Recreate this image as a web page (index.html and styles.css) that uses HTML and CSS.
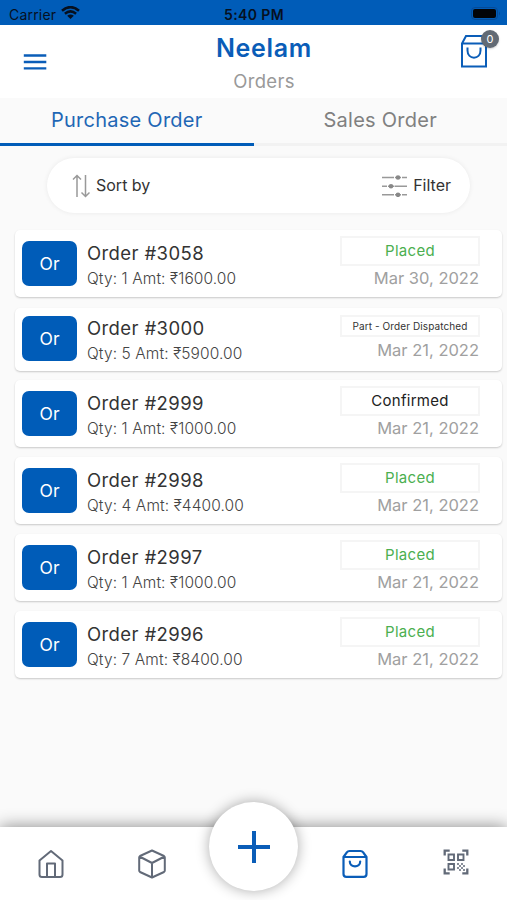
FILE: index.html
```html
<!DOCTYPE html>
<html lang="en">
<head>
<meta charset="utf-8">
<title>Orders</title>
<link rel="stylesheet" href="styles.css">
</head>
<body>
<div class="app">
  <div class="status">
    <div class="carrier"><span>Carrier</span>
      <svg width="19" height="14" viewBox="0 0 19 14"><path d="M1 4.8Q9.5-2.6 18 4.8M3.9 7.8Q9.500 3 15.100 7.800" fill="none" stroke="#06101f" stroke-width="2.500"/><path d="M6.200 9.700Q9.500 7.200 12.800 9.700L9.500 13Z" fill="#06101f"/></svg>
    </div>
    <div class="clock">5:40 PM</div>
    <svg class="battery" width="30" height="13" viewBox="0 0 30 13"><rect x=".5" y=".5" width="26" height="12" rx="3.500" fill="none" stroke="#064a96"/><rect x="2" y="2" width="23" height="9" rx="2" fill="#020408"/><path d="M28 4.500q2 2 0 4z" fill="#064a96"/></svg>
  </div>
  <header class="header">
    <svg class="menu" width="24" height="16" viewBox="0 0 24 16"><path d="M.8 1.500h22.500M.8 8h22.500M.8 14.400h22.500" stroke="#0a5db8" stroke-width="2.300"/></svg>
    <div class="titles"><h1>Neelam</h1><p>Orders</p></div>
    <div class="cart">
      <svg width="28" height="34" viewBox="0 0 28 34" fill="none" stroke="#0a5db8" stroke-width="2"><path d="M2 9.500 6 2h16l4 7.500V32.500H2ZM2 9.500h24"/><path d="M7.500 13.500v3c0 9.500 13 9.500 13 0v-3"/></svg>
      <span class="count">0</span>
    </div>
  </header>
  <nav class="tabs"><div class="tab active"><span>Purchase Order</span></div><div class="tab"><span class="sales">Sales Order</span></div></nav>
  <div class="tools">
    <div class="tool">
      <svg width="18" height="24" viewBox="0 0 18 24" fill="none" stroke="#999" stroke-width="1.500"><path d="M5 23V1.500M1 5.500l4-4 4 4M13.500 1v21.500M9.500 18.500l4 4 4-4"/></svg>
      <span class="sort">Sort by</span>
    </div>
    <div class="tool">
      <svg width="25" height="22" viewBox="0 0 25 22" stroke="#999" stroke-width="1.400"><path d="M0 2.500h12M20 2.500h5M0 11.200h5M12.500 11.200H25M0 19.800h12M20 19.800h5M13 2.500h6M6 11.200h6M13 19.800h6"/><g fill="#888" stroke="none"><circle cx="16" cy="2.500" r="2.300"/><circle cx="9" cy="11.200" r="2.300"/><circle cx="16" cy="19.800" r="2.300"/></g></svg>
      <span class="filter">Filter</span>
    </div>
  </div>
  <main class="orders">
    <article class="card first"><div class="avatar">Or</div><div class="info"><h2>Order #3058</h2><p>Qty: 1 Amt: ₹1600.00</p></div><div class="meta"><div class="badge placed">Placed</div><time>Mar 30, 2022</time></div></article>
    <article class="card short"><div class="avatar">Or</div><div class="info"><h2>Order #3000</h2><p>Qty: 5 Amt: ₹5900.00</p></div><div class="meta"><div class="badge part">Part - Order Dispatched</div><time>Mar 21, 2022</time></div></article>
    <article class="card"><div class="avatar">Or</div><div class="info"><h2>Order #2999</h2><p>Qty: 1 Amt: ₹1000.00</p></div><div class="meta"><div class="badge confirmed">Confirmed</div><time>Mar 21, 2022</time></div></article>
    <article class="card"><div class="avatar">Or</div><div class="info"><h2>Order #2998</h2><p>Qty: 4 Amt: ₹4400.00</p></div><div class="meta"><div class="badge placed">Placed</div><time>Mar 21, 2022</time></div></article>
    <article class="card"><div class="avatar">Or</div><div class="info"><h2>Order #2997</h2><p>Qty: 1 Amt: ₹1000.00</p></div><div class="meta"><div class="badge placed">Placed</div><time>Mar 21, 2022</time></div></article>
    <article class="card"><div class="avatar">Or</div><div class="info"><h2>Order #2996</h2><p>Qty: 7 Amt: ₹8400.00</p></div><div class="meta"><div class="badge placed">Placed</div><time>Mar 21, 2022</time></div></article>
  </main>
  <footer class="bottom">
    <div class="item"><svg width="26" height="30" viewBox="0 0 26 30" fill="none" stroke="#626a78" stroke-width="2" stroke-linejoin="round"><path d="M1.500 11.500 13 2l11.500 9.500v14q0 2.500-2.500 2.500H4q-2.500 0-2.500-2.500Z"/><path d="M9 28V14.500h8V28"/></svg></div>
    <div class="item"><svg width="28" height="30" viewBox="0 0 28 30" fill="none" stroke="#626a78" stroke-width="2" stroke-linejoin="round"><path d="M14 1.500 26 7q.8.500.8 1.500v13q0 1-.8 1.500L14 28.500 2 23q-.8-.5-.8-1.500v-13Q1.200 7.500 2 7ZM1.500 7.500 14 14l12.500-6.500M14 14v14.500"/></svg></div>
    <div class="item"></div>
    <div class="item"><svg width="26" height="30" viewBox="0 0 26 30" fill="none" stroke="#0a5db8" stroke-width="2.200" stroke-linejoin="round" stroke-linecap="round"><path d="M1.500 8 5 3.200Q5.800 2 7.500 2h11q1.700 0 2.500 1.200L24.500 8v17q0 2.800-2.800 2.800H4.300q-2.800 0-2.800-2.800ZM2 8h22"/><path d="M7.800 12.500c0 6.500 10.400 6.500 10.400 0"/></svg></div>
    <div class="item"><svg class="qr" width="26" height="26" viewBox="0 0 26 26" fill="none" stroke="#626a78" stroke-width="1.900"><path d="M1.700 6.500v-4.800h5M19.300 1.700h5v4.800M1.700 19.500v4.800h5M19.300 24.300h5v-4.800" stroke-width="2.300"/><path d="M5.500 5.500h5.500v5.500H5.500ZM15 5.500h5.500v5.500H15ZM5.500 15h5.500v5.500H5.500Z"/><path d="M14 15h2m2 0h2M16 17h2m2 0h2M14 19h2m2 0h2M16 21h2m2 0h2" stroke-width="1.700"/></svg></div>
    <div class="fab"><svg width="34" height="34" viewBox="0 0 34 34"><path d="M17 1v32M1 17h32" stroke="#0a5db8" stroke-width="4"/></svg></div>
  </footer>
</div>
</body>
</html>
```
FILE: styles.css
```css
* { box-sizing: border-box; }
body, h1, h2, p { margin: 0; font-weight: 400; }
body { font-family: Inter, "Noto Sans", sans-serif; color: #333; }
svg { display: block; flex: none; }
span, time, h1, h2, p, .badge { white-space: nowrap; }
.app { width: 507px; height: 900px; background: #fafafa; display: flex; flex-direction: column; overflow: hidden; }

.status { height: 25px; background: #005cb8; color: #06101f; display: grid; grid-template-columns: 1fr auto 1fr; align-items: center; padding: 3px 6px 0 9px; font-size: 14px; flex: none; }
.carrier { display: flex; align-items: center; gap: 5px; letter-spacing: .2px; }
.carrier svg { margin-top: -2px; }
.clock { font-weight: 600; letter-spacing: .4px; margin-right: 2px; }
.battery { justify-self: end; margin-top: -2px; }

.header { height: 73px; background: #fff; display: flex; align-items: flex-start; flex: none; padding-left: 23px; }
.menu { margin-top: 29px; }
.titles { width: 200px; margin-left: 117px; text-align: center; }
h1 { color: #0a5db8; font-size: 25px; font-weight: 600; line-height: 30px; margin-top: 8px; letter-spacing: .7px; }
.titles p { color: #999; font-size: 18.5px; line-height: 24px; margin-top: 6px; letter-spacing: .3px; }
.cart { position: relative; margin: 9px 0 0 96px; }
.count { position: absolute; left: 21px; top: -4px; width: 18px; height: 18px; border-radius: 50%; background: #626a74; color: #fff; font-size: 11px; line-height: 18px; text-align: center; box-shadow: 0 1px 2px #0003; }

.tabs { display: flex; height: 48px; flex: none; }
.tab { flex: 1; display: flex; align-items: flex-start; justify-content: center; padding-top: 9px; border-bottom: 3px solid #f2f2f2; color: #808080; font-size: 20px; line-height: 26px; letter-spacing: .25px; }
.tab.active { color: #1f67b5; border-color: #005cb8; }

.tools { width: 423px; height: 55px; margin: 12px 0 0 47px; padding: 0 19px 0 25px; border-radius: 28px; background: #fff; box-shadow: 0 0 5px #00000012; display: flex; align-items: center; justify-content: space-between; flex: none; }
.tool { display: flex; align-items: center; gap: 6px; font-size: 16px; }
.tool span { margin-top: -2px; }

.orders { display: flex; flex-direction: column; gap: 10px; padding: 17px 5px 0 15px; flex: 1; }
.card { height: 67px; background: #fff; border-radius: 5px; box-shadow: 0 1px 2px #0003; display: flex; padding: 0 22px 0 7px; flex: none; }
.card.first { margin-bottom: 1px; }
.card.short { height: 63px; margin-bottom: -1px; }
.avatar { width: 55px; height: 45px; margin-top: 11px; background: #005cb8; border-radius: 7px; color: #fff; font-size: 17.5px; line-height: 45px; text-align: center; }
.info { margin: 11px 0 0 10px; flex: 1; }
h2 { font-size: 18.5px; line-height: 24px; letter-spacing: .4px; }
.info p { font-size: 15.5px; font-weight: 300; line-height: 22px; margin-top: 3px; color: #444; letter-spacing: .1px; }
.meta { width: 140px; padding-top: 6px; text-align: right; }
.badge { height: 30px; border: 2px solid #f5f5f5; font-size: 15px; line-height: 26px; text-align: center; letter-spacing: .3px; }
.placed { color: #4caf50; }
.confirmed { color: #222; }
.part { height: 22px; font-size: 10px; line-height: 19px; letter-spacing: .1px; }
time { display: block; color: #a0a0a0; font-size: 16.5px; line-height: 22px; margin: 1px 1px 0 0; letter-spacing: 0; }
.short .avatar { margin-top: 8px; }
.short .info { margin-top: 8px; }
.short .meta { padding-top: 7px; }
.short time { margin-top: 2px; }

.bottom { position: relative; height: 73px; background: #fff; box-shadow: 0 0 16px #0007; display: flex; flex: none; }
.item { flex: 1; display: flex; justify-content: center; padding-top: 22px; }
.fab { position: absolute; left: 209px; top: -25px; width: 89px; height: 89px; border-radius: 50%; background: #fff; box-shadow: 0 0 14px #0005; display: flex; align-items: center; justify-content: center; }
```
